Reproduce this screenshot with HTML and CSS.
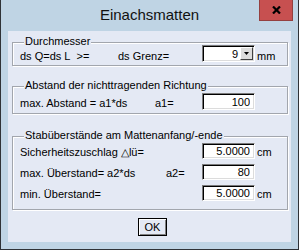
FILE: index.html
```html
<!DOCTYPE html>
<html>
<head>
    <title>Einachsmatten</title>
    <link rel="stylesheet" href="styles.css">
</head>
<body>
    <div class="window">
        <div class="titlebar">
            <span></span>
            <span class="title">Einachsmatten</span>
            <button class="close" title="Schließen">
                <svg width="9" height="8" viewBox="0 0 9 8"><path d="M1 0.5 L8 7.5 M8 0.5 L1 7.5" stroke="#000" stroke-width="2.2"/></svg>
            </button>
        </div>
        <div class="client">
            <div class="group group-1">
                <div class="legend">Durchmesser</div>
                <div class="row">
                    <span class="lbl">ds Q=ds L&nbsp;&nbsp;&gt;=</span>
                    <span class="lbl col-grenz">ds Grenz=</span>
                    <div class="combo">
                        <span class="combo-value">9</span>
                        <span class="combo-arrow"><svg width="5" height="3" viewBox="0 0 5 3"><path d="M0 0 H5 L2.5 3 Z" fill="#000"/></svg></span>
                    </div>
                    <span class="unit">mm</span>
                </div>
            </div>

            <div class="group group-2">
                <div class="legend">Abstand der nichttragenden Richtung</div>
                <div class="row">
                    <span class="lbl">max. Abstand = a1*ds</span>
                    <span class="lbl col-a1">a1=</span>
                    <input class="field" type="text" value="100">
                </div>
            </div>

            <div class="group group-3">
                <div class="legend">Stabüberstände am Mattenanfang/-ende</div>
                <div class="row row-sm">
                    <span class="lbl">Sicherheitszuschlag △lü=</span>
                    <input class="field col-input" type="text" value="5.0000">
                    <span class="unit">cm</span>
                </div>
                <div class="row row-sm">
                    <span class="lbl">max. Überstand= a2*ds</span>
                    <span class="lbl col-a2">a2=</span>
                    <input class="field" type="text" value="80">
                </div>
                <div class="row row-sm">
                    <span class="lbl">min. Überstand=</span>
                    <input class="field col-input" type="text" value="5.0000">
                    <span class="unit">cm</span>
                </div>
            </div>

            <button class="ok">OK</button>
        </div>
    </div>
</body>
</html>
```

FILE: styles.css
```css
body {
    margin: 0;
    background: #ffffff;
    font-family: "Liberation Sans", Arial, sans-serif;
    font-size: 11px;
    color: #000;
}
.window {
    width: 299px;
    height: 250px;
    box-sizing: border-box;
    background-color: #bfd4e4;
    border: 1px solid #2f3236;
    border-top: none;
}
.titlebar {
    height: 31px;
    display: grid;
    grid-template-columns: 1fr auto 1fr;
    align-items: start;
}
.title {
    font-size: 15px;
    line-height: 18px;
    padding-top: 6px;
    color: #111;
}
.close {
    justify-self: end;
    width: 34px;
    height: 21px;
    margin-right: 5px;
    padding: 0;
    background-color: #c75050;
    border: 1px solid #94403f;
    border-top: none;
    display: flex;
    align-items: center;
    justify-content: center;
}
.client {
    margin: 0 7px;
    height: 211px;
    box-sizing: border-box;
    background-color: #e4e9f4;
    padding: 11px 3px 0 4px;
}
.group {
    border: 1px solid #a2a6ad;
    box-shadow: inset 1px 1px 0 #ffffff, 1px 1px 0 #ffffff;
    padding-bottom: 3px;
}
.group-1 .row {
    margin-top: -3px;
}
.group-1 .lbl,
.group-1 .unit {
    margin-bottom: -1px;
}
.group-2 {
    margin-top: 20px;
}
.group-3 {
    margin-top: 22px;
    padding-bottom: 8px;
}
.legend {
    width: fit-content;
    margin: -8px 0 0 11px;
    padding: 0 1px;
    line-height: 13px;
    background-color: #e4e9f4;
}
.row {
    display: grid;
    grid-template-columns: 98px 37px 11px 36px 53px auto;
    align-items: end;
    padding-left: 7px;
    height: 17px;
    margin-top: 1px;
}
.row-sm {
    height: 16px;
}
.row-sm + .row-sm {
    margin-top: 5px;
}
.lbl {
    white-space: nowrap;
    line-height: 13px;
}
.col-grenz {
    grid-column: 2 / 5;
}
.col-a1 {
    grid-column: 3 / 5;
}
.col-a2 {
    grid-column: 4 / 5;
}
.col-input {
    grid-column: 5 / 6;
}
.unit {
    line-height: 13px;
    padding-left: 2px;
}
.field,
.combo {
    grid-column: 5 / 6;
    height: 100%;
    width: 53px;
    box-sizing: border-box;
    margin: 0;
    background: #fff;
    border: 1px solid;
    border-color: #7a7a7a #ffffff #ffffff #7a7a7a;
    box-shadow: inset 1px 1px 0 #000, inset -1px -1px 0 #dcdcdc;
    font-family: inherit;
    font-size: 11px;
    color: #000;
    text-align: right;
    padding: 0 4px 0 0;
    outline: none;
}
.combo {
    display: flex;
    align-items: center;
    justify-content: flex-end;
    padding: 1px 1px 1px 0;
}
.combo-value {
    padding-right: 2px;
}
.combo-arrow {
    width: 13px;
    align-self: stretch;
    box-sizing: border-box;
    background-color: #dcdcdc;
    border: 1px solid;
    border-color: #fff #404040 #404040 #fff;
    display: flex;
    align-items: center;
    justify-content: center;
}
.ok {
    display: block;
    margin: 8px 0 0 126px;
    width: 29px;
    height: 18px;
    padding: 0;
    background-color: #e4e9f4;
    border: 1px solid #000;
    box-shadow: inset 1px 1px 0 #fff, inset -1px -1px 0 #808080;
    font-family: inherit;
    font-size: 11px;
    color: #000;
}
```
